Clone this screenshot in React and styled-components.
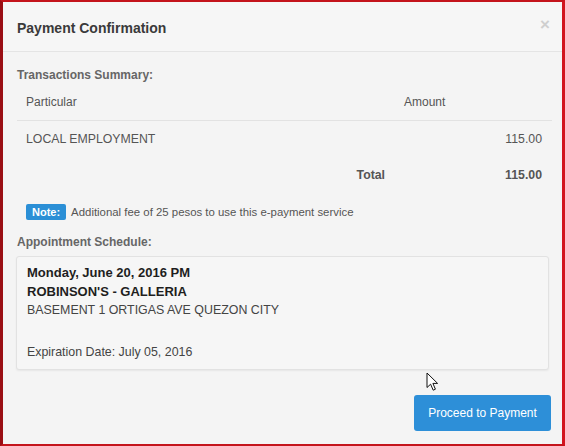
import React from "react";
import styled, { createGlobalStyle } from "styled-components";

const GlobalStyle = createGlobalStyle`
  html, body {
    margin: 0;
    padding: 0;
    background: #f4f4f4;
  }
  body {
    font-family: "Liberation Sans", Arial, sans-serif;
  }
`;

const rows = [{ particular: "LOCAL EMPLOYMENT", amount: "115.00" }];

const App = () => {
  return (
    <>
      <GlobalStyle />
      <Frame>
        <Header>
          <Title>Payment Confirmation</Title>
          <Close>×</Close>
        </Header>
        <Body>
          <SectionTitle>Transactions Summary:</SectionTitle>
          <Table>
            <thead>
              <tr>
                <HeadCell>Particular</HeadCell>
                <HeadCell />
                <HeadCell $width="139px">Amount</HeadCell>
              </tr>
            </thead>
            <tbody>
              {rows.map((row) => (
                <tr key={row.particular}>
                  <Cell>{row.particular}</Cell>
                  <Cell />
                  <Cell $align="right">{row.amount}</Cell>
                </tr>
              ))}
              <tr>
                <Cell />
                <Cell $align="right" $bold>
                  Total
                </Cell>
                <Cell $align="right" $bold>
                  115.00
                </Cell>
              </tr>
            </tbody>
          </Table>
          <NoteLine>
            <NoteBadge>Note:</NoteBadge>
            <NoteText>Additional fee of 25 pesos to use this e-payment service</NoteText>
          </NoteLine>
          <SectionTitle $top="14px">Appointment Schedule:</SectionTitle>
          <ScheduleCard>
            <ScheduleLine $bold>Monday, June 20, 2016 PM</ScheduleLine>
            <ScheduleLine $bold>ROBINSON'S - GALLERIA</ScheduleLine>
            <ScheduleLine>BASEMENT 1 ORTIGAS AVE QUEZON CITY</ScheduleLine>
            <ScheduleLine $top="24px">Expiration Date: July 05, 2016</ScheduleLine>
          </ScheduleCard>
        </Body>
        <Footer>
          <PrimaryButton>Proceed to Payment</PrimaryButton>
        </Footer>
        <Pointer width="13" height="20" viewBox="0 0 13 20">
          <path
            d="M1 1 L1 15.5 L4.6 12.2 L7.2 18.2 L9.4 17.2 L6.9 11.4 L11.6 11.4 Z"
            fill="#fff"
            stroke="#111"
            strokeWidth="1"
            strokeLinejoin="round"
          />
        </Pointer>
      </Frame>
    </>
  );
};

export default App;

const Frame = styled.div`
  position: relative;
  box-sizing: border-box;
  width: 565px;
  height: 446px;
  display: flex;
  flex-direction: column;
  background: #f4f4f4;
  border-top: 2px solid #c4141c;
  border-right: 3px solid #d2141e;
  border-bottom: 2px solid #c4141c;
  border-left: 3px solid #9a0e14;
  overflow: hidden;
`;

const Header = styled.div`
  height: 49px;
  display: flex;
  align-items: center;
  justify-content: space-between;
  padding: 0 14px 0 14px;
  background: #f6f6f6;
  border-bottom: 1px solid #e4e4e4;
`;

const Title = styled.div`
  font-size: 14px;
  font-weight: bold;
  color: #3a3a3a;
  padding-top: 2px;
`;

const Close = styled.div`
  font-size: 17px;
  font-weight: bold;
  color: #cfcfcf;
  line-height: 1;
  margin-top: -5px;
  margin-right: -2px;
`;

const Body = styled.div`
  padding: 15px 10px 0 14px;
`;

const SectionTitle = styled.div`
  margin-top: ${(p) => p.$top || "0"};
  font-size: 12px;
  line-height: 16px;
  font-weight: bold;
  color: #666;
`;

const Table = styled.table`
  width: 100%;
  border-collapse: collapse;
  font-size: 12.3px;
  color: #555;
`;

const HeadCell = styled.th`
  width: ${(p) => p.$width || "auto"};
  text-align: left;
  font-weight: normal;
  font-size: 12px;
  line-height: 18px;
  padding: 10px 9px 9px 9px;
  border-bottom: 1px solid #e2e2e2;
`;

const Cell = styled.td`
  text-align: ${(p) => p.$align || "left"};
  font-weight: ${(p) => (p.$bold ? "bold" : "normal")};
  line-height: 18px;
  padding: 9px 10px 9px 9px;
`;

const NoteLine = styled.div`
  margin: 11px 0 0 9px;
  display: flex;
  align-items: center;
  gap: 5px;
  height: 16px;
`;

const NoteBadge = styled.span`
  display: inline-block;
  background: #2b8fd6;
  color: #fff;
  font-size: 11px;
  font-weight: bold;
  line-height: 16px;
  padding: 0 6px;
  border-radius: 2px;
`;

const NoteText = styled.span`
  font-size: 11.4px;
  color: #555;
`;

const ScheduleCard = styled.div`
  margin: 6px 3px 0 -1px;
  height: 114px;
  box-sizing: border-box;
  padding: 6px 10px 8px 10px;
  background: #f6f6f6;
  border: 1px solid #e2e2e2;
  border-radius: 3px;
  box-shadow: 0 1px 2px rgba(0, 0, 0, 0.06);
`;

const ScheduleLine = styled.div`
  margin-top: ${(p) => p.$top || "0"};
  font-size: ${(p) => (p.$bold ? "13px" : "12.4px")};
  line-height: ${(p) => (p.$bold ? "19px" : "18px")};
  font-weight: ${(p) => (p.$bold ? "bold" : "normal")};
  color: ${(p) => (p.$bold ? "#1e1e1e" : "#444")};
`;

const Footer = styled.div`
  display: flex;
  justify-content: flex-end;
  padding: 25px 11px 0 0;
`;

const PrimaryButton = styled.button`
  width: 137px;
  height: 36px;
  border: none;
  border-radius: 3px;
  background: #2d8fd8;
  color: #fff;
  font-family: "Liberation Sans", Arial, sans-serif;
  font-size: 12px;
  cursor: pointer;
`;

const Pointer = styled.svg`
  position: absolute;
  left: 423px;
  top: 370px;
`;
